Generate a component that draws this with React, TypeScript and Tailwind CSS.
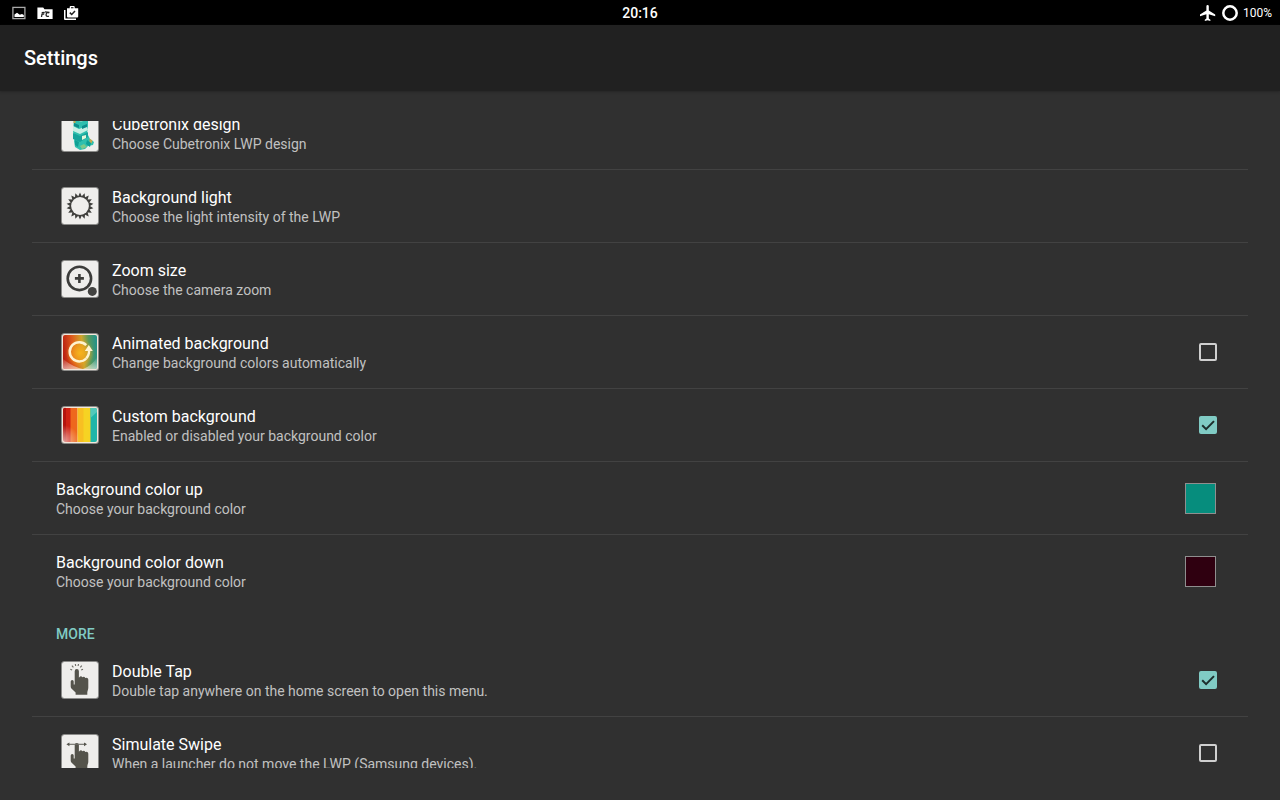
import { useState, type ReactNode } from "react";

const HAND =
  "M18.7 15.2a2.1 2.1 0 0 1 4.2 0v6.6l.6-.9a2 2 0 0 1 2.9.3 2 2 0 0 1 2.9.8 2 2 0 0 1 3 1.8v7.6c0 2.400-1 3.200-1 5.200v2.200H19.600v-2.200l-4.200-4.200c-.5-.6-.7-1.200-.7-2v-5a1.500 1.500 0 0 1 3 0v3.200h1z";

const TEETH = 18;

// Alternates between the tip and the root radius of the gear's teeth.
const GEAR = Array.from({ length: TEETH * 2 }, (_, i) => {
  const angle = (i * Math.PI) / TEETH - Math.PI / 2;
  const radius = i % 2 === 0 ? 13.6 : 10;
  return `${24 + radius * Math.cos(angle)},${24 + radius * Math.sin(angle)}`;
}).join(" ");

function Tile({ fill = "#efeeec", children }: { fill?: string; children: ReactNode }) {
  return (
    <svg viewBox="0 0 48 48" className="size-12 shrink-0" aria-hidden="true">
      <rect x="5" y="5" width="38" height="38" rx="3.500" fill="#8b8b89" />
      <rect x="6" y="6" width="36" height="36" rx="2.500" fill={fill} />
      {children}
    </svg>
  );
}

function CubeIcon() {
  return (
    <Tile>
      <path d="M18 9l7-3 7 4v9l-1 5 3 6 4 3-1 3-5 1-3 3-5 1-5-3-1-6 1-4-2-5z" fill="#2fbfae" />
      <path d="M18 10l7-4 7 4-7 3z" fill="#7fd8c2" />
      <path d="M17 17l6 3 8-3 1 4-8 4-7-3z" fill="#c6efe4" />
      <path d="M17 24l7 3 8-4v5l-8 5-7-3z" fill="#16a39b" />
      <path d="M18 14l5 2v3l-5-2zM26 17l5-2v3l-5 2z" fill="#0c8c8b" />
      <path d="M19 31l4 2-1 5-3-2zM31 31l4 3-1 4-4-3z" fill="#0f9f95" />
      <path d="M24 37l4-2 3 3-5 2z" fill="#7fc98a" />
      <path d="M17.500 12l2-1.500v3.500h-2zM33.500 29.500l3 2-1 3-2-2z" fill="#c3a94d" />
      <path d="M26 27l4-1v3l-4 2z" fill="#e5f6da" />
    </Tile>
  );
}

function LightIcon() {
  return (
    <Tile>
      <polygon points={GEAR} fill="#3f3f3c" />
      <circle cx="24" cy="24" r="8.900" fill="#efeeec" />
    </Tile>
  );
}

function ZoomIcon() {
  return (
    <Tile>
      <circle cx="23.400" cy="23.400" r="11.700" fill="none" stroke="#3c3c3a" strokeWidth="2.600" />
      <path d="M23.400 18.900v9M18.900 23.400h9" stroke="#3c3c3a" strokeWidth="2.600" />
      <circle cx="36.300" cy="36.400" r="4.500" fill="#434341" />
    </Tile>
  );
}

function AnimatedIcon() {
  return (
    <Tile fill="#f3e6da">
      <defs>
        <linearGradient id="anim-base" x1="0" y1="0.500" x2="1" y2="0.400">
          <stop offset="0" stopColor="#b81f12" />
          <stop offset="0.300" stopColor="#de5a1c" />
          <stop offset="0.580" stopColor="#cfa52b" />
          <stop offset="0.780" stopColor="#5a9a5d" />
          <stop offset="1" stopColor="#239288" />
        </linearGradient>
        <radialGradient id="anim-glow">
          <stop offset="0" stopColor="#f8b51b" />
          <stop offset="0.550" stopColor="#f3a41c" stopOpacity="0.650" />
          <stop offset="1" stopColor="#f3a41c" stopOpacity="0" />
        </radialGradient>
        <linearGradient id="anim-shine" x1="0.500" y1="0" x2="0.500" y2="1">
          <stop offset="0" stopColor="#ffffff" stopOpacity="0" />
          <stop offset="1" stopColor="#ffffff" stopOpacity="0.550" />
        </linearGradient>
      </defs>
      <rect x="7" y="7" width="34" height="34" rx="2" fill="url(#anim-base)" />
      <circle cx="24" cy="25" r="14" fill="url(#anim-glow)" />
      <path d="M7 31q10 8 20 10H9q-2 0-2-2zM41 29v10q0 2-2 2H27q10-4 14-12z" fill="url(#anim-shine)" />
      <path
        d="M30.200 30.500A9.600 9.600 0 1 1 30.200 17.100"
        fill="none"
        stroke="#fff3cf"
        strokeWidth="2.500"
      />
      <path d="M32.800 17l4 6h-2.500c0 3.200-1.200 6-3.200 8.200l-1.800-1.700c1.700-1.800 2.600-3.900 2.600-6.500h-3.100z" fill="#fff3cf" />
    </Tile>
  );
}

function CustomIcon() {
  return (
    <Tile fill="#f3e6da">
      <defs>
        <radialGradient id="custom-shine" cx="0" cy="1" r="0.500">
          <stop offset="0" stopColor="#ffffff" stopOpacity="0.600" />
          <stop offset="1" stopColor="#ffffff" stopOpacity="0" />
        </radialGradient>
      </defs>
      <path d="M10 7h5v34h-5a3 3 0 0 1-3-2V9a2 2 0 0 1 3-2z" fill="#b3140f" />
      <path d="M10 7h5v34h-5z" fill="#cf2213" />
      <path d="M14.500 7h7v34h-7z" fill="#ee681d" />
      <path d="M21.500 7H28v34h-6.500z" fill="#f8bf22" />
      <path d="M27.500 7h7.500v34h-7.500z" fill="#f6d323" />
      <path d="M34.500 7H39a2 2 0 0 1 2 2v30a2 2 0 0 1-2 2h-4.500z" fill="#1fb5a8" />
      <path d="M34.500 17l6.500-6V9a2 2 0 0 0-2-2h-4.500z" fill="#52c9ba" />
      <rect x="7" y="7" width="34" height="34" rx="2" fill="url(#custom-shine)" />
    </Tile>
  );
}

function TapIcon() {
  return (
    <Tile>
      <path d={HAND} fill="#54534b" />
      <path
        d="M14.300 13.200l1.800.8M15.900 9.600l1.500 1.700M19.300 8l.4 2M22.500 8l-.4 2M25.800 9.600l-1.500 1.700M27 13.200l-1.800.8"
        stroke="#6b6a64"
        strokeWidth="1.100"
      />
    </Tile>
  );
}

function SwipeIcon() {
  return (
    <Tile>
      <g transform="translate(0 1)">
        <path d={HAND} fill="#54534b" />
        <path d="M12 14.300h18" stroke="#6b6a64" strokeWidth="1.100" />
        <path d="M10.400 14.300l3-1.900v3.800zM31 14.300l-3-1.900v3.800z" fill="#54534b" />
      </g>
    </Tile>
  );
}

function RowText({ title, summary }: { title: string; summary: string }) {
  return (
    <span className="min-w-0 flex-1 pt-0.5">
      <span className="block truncate text-base leading-5 text-white">{title}</span>
      <span className="block truncate text-sm leading-[18px] text-[#c1c1c1]">{summary}</span>
    </span>
  );
}

const ROW = "flex h-[73px] w-full items-center gap-2 border-b px-6 text-left";

type RowProps = { title: string; summary: string; icon?: ReactNode; last?: boolean };

function ActionRow({ title, summary, icon, last, swatch }: RowProps & { swatch?: ReactNode }) {
  return (
    <button type="button" className={`${ROW} ${last ? "border-transparent" : "border-[#424242]"}`}>
      {icon}
      <RowText title={title} summary={summary} />
      {swatch}
    </button>
  );
}

function CheckRow({ title, summary, icon, last, initial = false }: RowProps & { initial?: boolean }) {
  const [checked, setChecked] = useState(initial);
  return (
    <label className={`${ROW} ${last ? "border-transparent" : "border-[#424242]"}`}>
      {icon}
      <RowText title={title} summary={summary} />
      <span className="relative grid size-8 shrink-0 place-items-center">
        <input
          type="checkbox"
          checked={checked}
          onChange={(e) => setChecked(e.target.checked)}
          className="peer size-[18px] appearance-none rounded-xs border-2 border-[#cfcfcf] checked:border-[#80cbc4] checked:bg-[#80cbc4]"
        />
        <svg
          viewBox="0 0 18 18"
          aria-hidden="true"
          className="pointer-events-none absolute top-[7px] left-[7px] hidden size-[18px] peer-checked:block"
        >
          <path d="M3.200 9.200l3.900 3.900 7.900-8" fill="none" stroke="#1d2e2c" strokeWidth="2" />
        </svg>
      </span>
    </label>
  );
}

function StatusBar() {
  return (
    <div className="grid h-[25px] shrink-0 grid-cols-3 items-center bg-black text-white">
      <div className="flex items-center gap-[10px] pl-[11px]">
        <svg viewBox="0 0 16 16" className="size-4" aria-hidden="true">
          <rect x="1.900" y="2.400" width="12" height="11.200" fill="none" stroke="#a9a9a9" strokeWidth="1.300" />
          <path d="M3.500 12V9.500l2.500-1.800 2.800 2 2.200-.8 1.800 1.200V12z" fill="#fff" />
        </svg>
        <svg viewBox="0 0 16 16" className="size-4" aria-hidden="true">
          <path d="M.4 2.500h5.800l1.300 1.700h8.100v9.800H.4z" fill="#fff" />
          <path
            d="M4.500 12l.6-3.300M4.700 7.700l3-.2M5 9.200l2.200-.1M12.300 8c-1.500-.9-3-.2-3.200 1.500-.2 1.800 1.200 2.400 2.800 1.600M8 6.900l4.500.4"
            fill="none"
            stroke="#222"
            strokeWidth="1.300"
          />
        </svg>
        <svg viewBox="0 0 16 16" className="size-4" aria-hidden="true">
          <path
            d="M1 5h1.500v8.500H13V15H2a1 1 0 0 1-1-1zM4 3.200h2.700V2a1 1 0 0 1 1-1h3a1 1 0 0 1 1 1v1.200h3.500v8.300a1 1 0 0 1-1 1H5a1 1 0 0 1-1-1zM8 2.200v1h2.500v-1z"
            fill="#fff"
            fillRule="evenodd"
          />
          <path d="M6.800 7.600l1.900 1.900 3.300-3.500" fill="none" stroke="#222" strokeWidth="1.500" />
        </svg>
      </div>
      <time className="text-center text-sm font-medium">20:16</time>
      <div className="flex items-center justify-end gap-[5px] pr-2">
        <svg viewBox="3 2 18 20" className="mr-px h-4 w-4" aria-label="Airplane mode" role="img">
          <path
            d="M21 16v-2l-8-5V3.500a1.500 1.500 0 0 0-3 0V9l-8 5v2l8-2.500V19l-2 1.500V22l3.500-1 3.500 1v-1.500L13 19v-5.500z"
            fill="#fff"
          />
        </svg>
        <svg viewBox="0 0 16 16" className="size-4" aria-label="Battery" role="img">
          <circle cx="8" cy="8" r="6.700" fill="none" stroke="#fff" strokeWidth="2.500" />
        </svg>
        <span className="text-xs">100%</span>
      </div>
    </div>
  );
}

export default function App() {
  return (
    <div className="flex h-screen flex-col bg-[#303030] font-[Roboto,'Liberation_Sans',sans-serif] text-white">
      <StatusBar />
      <header className="flex h-[66px] shrink-0 items-center bg-[#212121] px-6 shadow-[0_1px_2px_#262626]">
        <h1 className="text-xl font-medium">Settings</h1>
      </header>
      <main className="flex min-h-0 flex-1 flex-col px-8 pt-[30px] pb-8">
        <div className="min-h-0 flex-1 overflow-hidden">
          <section className="-mt-6">
            <ActionRow title="Cubetronix design" summary="Choose Cubetronix LWP design" icon={<CubeIcon />} />
            <ActionRow title="Background light" summary="Choose the light intensity of the LWP" icon={<LightIcon />} />
            <ActionRow title="Zoom size" summary="Choose the camera zoom" icon={<ZoomIcon />} />
            <CheckRow
              title="Animated background"
              summary="Change background colors automatically"
              icon={<AnimatedIcon />}
            />
            <CheckRow
              title="Custom background"
              summary="Enabled or disabled your background color"
              icon={<CustomIcon />}
              initial
            />
            <ActionRow
              title="Background color up"
              summary="Choose your background color"
              swatch={<span className="mr-2 size-[31px] shrink-0 border border-[#8f8f8f] bg-[#068d7d]" />}
            />
            <ActionRow
              title="Background color down"
              summary="Choose your background color"
              swatch={<span className="mr-2 size-[31px] shrink-0 border border-[#8f8f8f] bg-[#2f0010]" />}
              last
            />
          </section>
          <section>
            <h2 className="flex h-9 items-end px-6 text-sm leading-5 font-medium text-[#80cbc4]">MORE</h2>
            <CheckRow
              title="Double Tap"
              summary="Double tap anywhere on the home screen to open this menu."
              icon={<TapIcon />}
              initial
            />
            <CheckRow
              title="Simulate Swipe"
              summary="When a launcher do not move the LWP (Samsung devices)."
              icon={<SwipeIcon />}
              last
            />
          </section>
        </div>
      </main>
    </div>
  );
}
